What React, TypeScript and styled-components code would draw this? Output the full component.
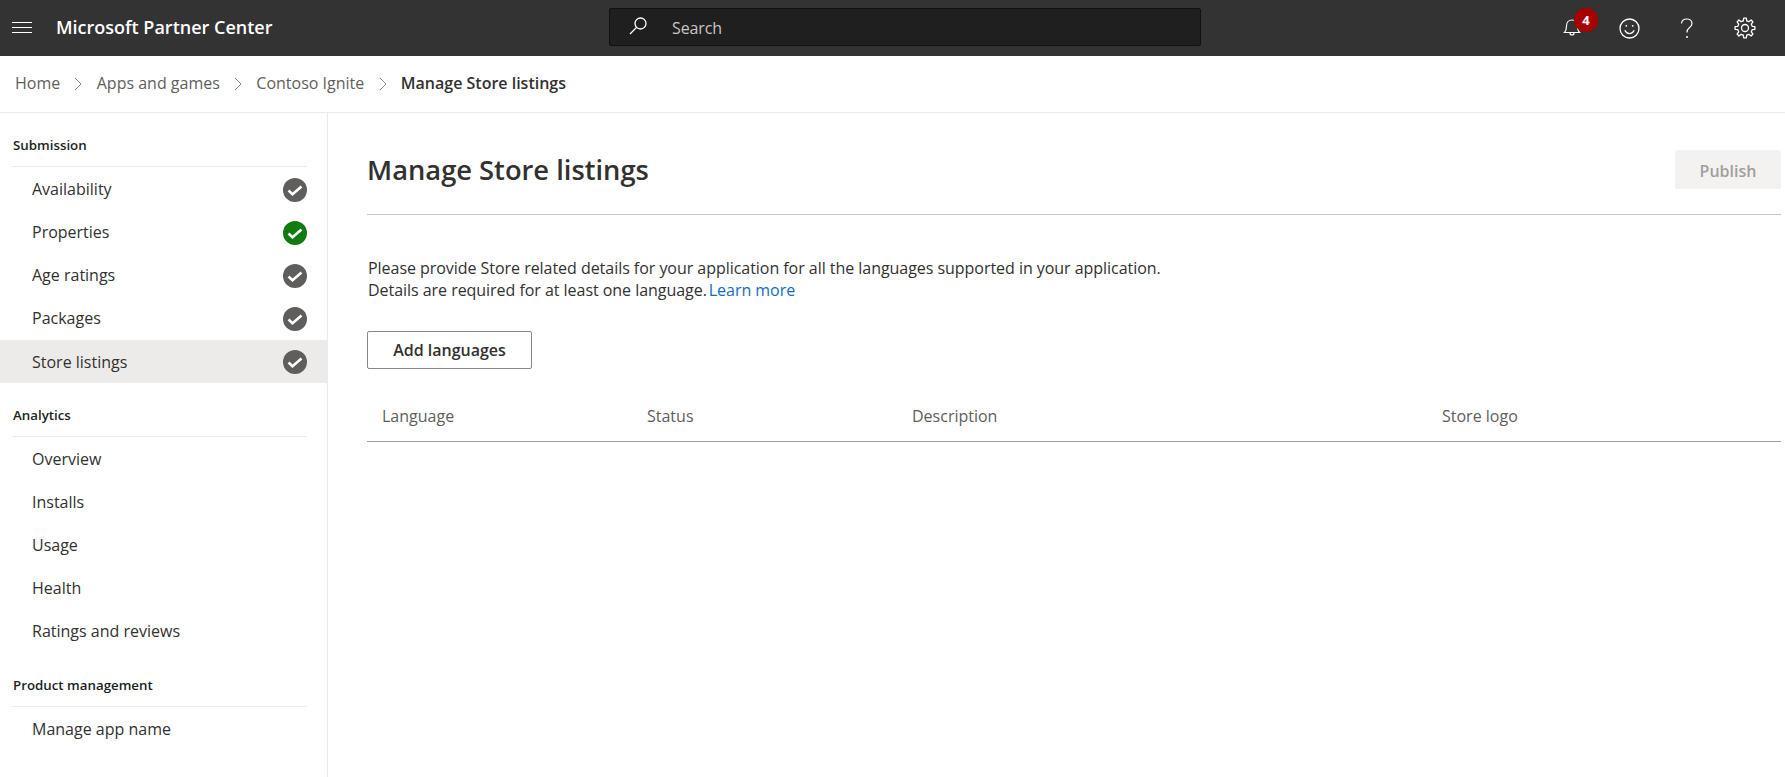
import React from "react";
import styled, { createGlobalStyle } from "styled-components";

const Global = createGlobalStyle`
  html, body { margin: 0; padding: 0; height: 100%; background: #fff; overflow: hidden; }
  body { font-family: "Open Sans", "Noto Sans", "Liberation Sans", sans-serif; color: #323130; }
  #root { height: 100%; }
`;

const Page = styled.div`
  display: flex;
  flex-direction: column;
  height: 777px;
  overflow: hidden;
`;

const TopBar = styled.header`
  display: grid;
  grid-template-columns: 609px 592px 1fr;
  align-items: center;
  height: 56px;
  background: #333333;
  color: #fff;
  flex: none;
`;

const Brand = styled.div`
  display: flex;
  align-items: center;
  padding-left: 12px;
  gap: 24px;
`;

const BrandName = styled.span`
  margin-bottom: 2px;
  font-size: 18px;
  font-weight: 600;
  color: #fff;
`;

const SearchBox = styled.div`
  display: flex;
  align-items: center;
  height: 38px;
  margin-bottom: 2px;
  box-sizing: border-box;
  background: #1f1f1f;
  border: 1px solid #111;
  border-radius: 2px;
  padding-left: 19px;
  gap: 25px;
  svg { margin-bottom: 3px; }
`;

const SearchText = styled.span`
  margin-top: 2px;
  font-size: 16px;
  letter-spacing: -0.1px;
  color: #c8c6c4;
`;

const TopActions = styled.div`
  display: grid;
  grid-template-columns: 58px 57px 58px 58px;
  justify-items: center;
  justify-content: end;
  padding-right: 11px;
`;

const IconSlot = styled.div`
  position: relative;
  display: flex;
  align-items: center;
  justify-content: center;
  height: 28px;
  width: 28px;
`;

const Badge = styled.span`
  position: absolute;
  top: -6px;
  left: 16px;
  width: 24px;
  height: 24px;
  border-radius: 50%;
  background: #a80000;
  color: #fff;
  font-size: 13px;
  font-weight: 700;
  line-height: 24px;
  text-align: center;
`;

const Breadcrumb = styled.nav`
  display: flex;
  align-items: center;
  height: 57px;
  box-sizing: border-box;
  border-bottom: 1px solid #edebe9;
  padding-left: 15px;
  flex: none;
`;

const Crumb = styled.span<{ $current?: boolean }>`
  margin-bottom: 2px;
  font-size: 16px;
  font-weight: ${(p) => (p.$current ? 600 : 400)};
  color: ${(p) => (p.$current ? "#323130" : "#605e5c")};
`;

const CrumbSep = styled.span`
  display: flex;
  justify-content: center;
  width: 36.5px;
`;

const Body = styled.div`
  display: flex;
  flex: 1;
  min-height: 0;
`;

const Sidebar = styled.aside`
  width: 328px;
  box-sizing: border-box;
  border-right: 1px solid #edebe9;
  flex: none;
`;

const Section = styled.section`
  padding-top: 21px;
`;

const SectionTitle = styled.h2`
  margin: 0 20px 0 12px;
  padding: 0 0 10px 1px;
  border-bottom: 1px solid #edebe9;
  font-size: 13.3px;
  font-weight: 600;
  line-height: 22px;
  color: #201f1e;
`;

const NavList = styled.ul`
  list-style: none;
  margin: 1px 0 0;
  padding: 0;
`;

const NavItem = styled.li<{ $active?: boolean }>`
  display: flex;
  align-items: center;
  justify-content: space-between;
  height: 43px;
  padding: 0 20px 0 32px;
  font-size: 16px;
  color: #323130;
  background: ${(p) => (p.$active ? "#edebe9" : "transparent")};
`;

const NavLabel = styled.span<{ $active?: boolean }>`
  margin-bottom: ${(p) => (p.$active ? 0 : 1)}px;
`;

const Main = styled.main`
  flex: 1;
  min-width: 0;
  padding: 0 4px 0 39px;
`;

const TitleRow = styled.div`
  display: flex;
  justify-content: space-between;
  height: 102px;
  box-sizing: border-box;
  padding-top: 37px;
  border-bottom: 1px solid #c8c6c4;
`;

const Title = styled.h1`
  margin: 0;
  font-size: 27.3px;
  font-weight: 600;
  line-height: 40px;
  color: #323130;
`;

const PublishButton = styled.button`
  width: 106px;
  height: 39px;
  padding: 2px 0 0;
  border: 0;
  border-radius: 2px;
  background: #f3f2f1;
  color: #a19f9d;
  font: 600 16px "Open Sans", sans-serif;
`;

const Intro = styled.p`
  margin: 42px 0 0 1px;
  font-size: 16px;
  line-height: 22px;
  letter-spacing: -0.04px;
  color: #323130;
`;

const LearnMore = styled.a`
  color: #106ebe;
  margin-left: 2px;
`;

const AddButton = styled.button`
  display: block;
  margin-top: 30px;
  width: 165px;
  height: 38px;
  box-sizing: border-box;
  background: #fff;
  border: 1px solid #8a8886;
  border-radius: 2px;
  color: #323130;
  font: 600 16px "Open Sans", sans-serif;
`;

const TableHead = styled.div`
  display: grid;
  grid-template-columns: 265px 265px 530px 1fr;
  align-items: center;
  height: 73px;
  box-sizing: border-box;
  padding: 22px 0 0 15px;
  border-bottom: 1px solid #a19f9d;
`;

const HeadCell = styled.span`
  font-size: 16px;
  color: #605e5c;
`;

const MenuIcon = () => (
  <svg width="20" height="12" viewBox="0 0 20 12" fill="none" stroke="#fff" strokeWidth="1">
    <path d="M0 .5h20M0 5.5h20M0 10.5h20" />
  </svg>
);

const SearchIcon = () => (
  <svg width="18" height="18" viewBox="0 0 18 18" fill="none" stroke="#fff" strokeWidth="1.3">
    <circle cx="11.5" cy="6.5" r="5.5" />
    <path d="M7.6 10.4 1 17" />
  </svg>
);

const BellIcon = () => (
  <svg width="20" height="20" viewBox="0 1 20 20" fill="none" stroke="#fff" strokeWidth="1.2">
    <path d="M2.5 15.5c1.5-1.5 2-3 2-6.5 0-3.5 2.2-6 5.5-6s5.5 2.5 5.5 6c0 3.5.5 5 2 6.5z" />
    <path d="M8 16c0 1.3.9 2 2 2s2-.7 2-2" />
  </svg>
);

const SmileIcon = () => (
  <svg width="21" height="21" viewBox="0 0 21 21" fill="none" stroke="#fff" strokeWidth="1.3">
    <circle cx="10.5" cy="10.5" r="9.5" />
    <path d="M5.8 12.3c1 2.2 2.6 3.3 4.7 3.3s3.7-1.1 4.7-3.3" />
    <circle cx="7.3" cy="7.8" r=".9" fill="#fff" stroke="none" />
    <circle cx="13.7" cy="7.8" r=".9" fill="#fff" stroke="none" />
  </svg>
);

const HelpIcon = () => (
  <svg width="14" height="21" viewBox="0 0 14 21" fill="none" stroke="#fff" strokeWidth="1.2">
    <path d="M1.5 5.5C1.7 2.8 3.8 1 6.8 1c3.1 0 5.2 1.9 5.2 4.4 0 2-1 3.1-2.7 4.3C7.7 10.9 7 12 7 14.5" />
    <circle cx="7" cy="19" r="1" fill="#fff" stroke="none" />
  </svg>
);

const gearPath = (() => {
  const teeth = 8;
  const outer = 10;
  const inner = 7.4;
  const points: string[] = [];
  for (let i = 0; i < teeth; i++) {
    const base = (i * 2 * Math.PI) / teeth;
    const step = (2 * Math.PI) / teeth;
    [
      [inner, base - step * 0.3],
      [outer, base - step * 0.17],
      [outer, base + step * 0.17],
      [inner, base + step * 0.3],
    ].forEach(([r, a]) => {
      points.push(`${(11 + r * Math.sin(a)).toFixed(2)} ${(11 - r * Math.cos(a)).toFixed(2)}`);
    });
  }
  return `M${points.join("L")}Z`;
})();

const GearIcon = () => (
  <svg width="22" height="22" viewBox="0 0 22 22" fill="none" stroke="#fff" strokeWidth="1.3" strokeLinejoin="round">
    <path d={gearPath} />
    <circle cx="11" cy="11" r="3.5" />
  </svg>
);

const Chevron = () => (
  <svg width="8" height="14" viewBox="0 0 8 14" fill="none" stroke="#8a8886" strokeWidth="1">
    <path d="M1 1l6 6-6 6" />
  </svg>
);

const StatusCheck = ({ color }: { color: string }) => (
  <svg width="24" height="24" viewBox="0 0 24 24">
    <circle cx="12" cy="12" r="12" fill={color} />
    <path d="M5.5 12.5l4 3.7 9-7.7" fill="none" stroke="#fff" strokeWidth="2.6" />
  </svg>
);

const GREY = "#605e5c";
const GREEN = "#107c10";

const submission = [
  { label: "Availability", color: GREY },
  { label: "Properties", color: GREEN },
  { label: "Age ratings", color: GREY },
  { label: "Packages", color: GREY },
  { label: "Store listings", color: GREY, active: true },
];

const analytics = ["Overview", "Installs", "Usage", "Health", "Ratings and reviews"];

export default function App() {
  return (
    <Page>
      <Global />
      <TopBar>
        <Brand>
          <MenuIcon />
          <BrandName>Microsoft Partner Center</BrandName>
        </Brand>
        <SearchBox>
          <SearchIcon />
          <SearchText>Search</SearchText>
        </SearchBox>
        <TopActions>
          <IconSlot>
            <BellIcon />
            <Badge>4</Badge>
          </IconSlot>
          <IconSlot><SmileIcon /></IconSlot>
          <IconSlot><HelpIcon /></IconSlot>
          <IconSlot><GearIcon /></IconSlot>
        </TopActions>
      </TopBar>
      <Breadcrumb>
        <Crumb>Home</Crumb>
        <CrumbSep><Chevron /></CrumbSep>
        <Crumb>Apps and games</Crumb>
        <CrumbSep><Chevron /></CrumbSep>
        <Crumb>Contoso Ignite</Crumb>
        <CrumbSep><Chevron /></CrumbSep>
        <Crumb $current>Manage Store listings</Crumb>
      </Breadcrumb>
      <Body>
        <Sidebar>
          <Section>
            <SectionTitle>Submission</SectionTitle>
            <NavList>
              {submission.map((item) => (
                <NavItem key={item.label} $active={item.active}>
                  <NavLabel $active={item.active}>{item.label}</NavLabel>
                  <StatusCheck color={item.color} />
                </NavItem>
              ))}
            </NavList>
          </Section>
          <Section>
            <SectionTitle>Analytics</SectionTitle>
            <NavList>
              {analytics.map((label) => (
                <NavItem key={label}><NavLabel>{label}</NavLabel></NavItem>
              ))}
            </NavList>
          </Section>
          <Section>
            <SectionTitle>Product management</SectionTitle>
            <NavList>
              <NavItem><NavLabel>Manage app name</NavLabel></NavItem>
            </NavList>
          </Section>
        </Sidebar>
        <Main>
          <TitleRow>
            <Title>Manage Store listings</Title>
            <PublishButton disabled>Publish</PublishButton>
          </TitleRow>
          <Intro>
            Please provide Store related details for your application for all the languages supported in your application.
            <br />
            Details are required for at least one language.<LearnMore>Learn more</LearnMore>
          </Intro>
          <AddButton>Add languages</AddButton>
          <TableHead>
            <HeadCell>Language</HeadCell>
            <HeadCell>Status</HeadCell>
            <HeadCell>Description</HeadCell>
            <HeadCell>Store logo</HeadCell>
          </TableHead>
        </Main>
      </Body>
    </Page>
  );
}
